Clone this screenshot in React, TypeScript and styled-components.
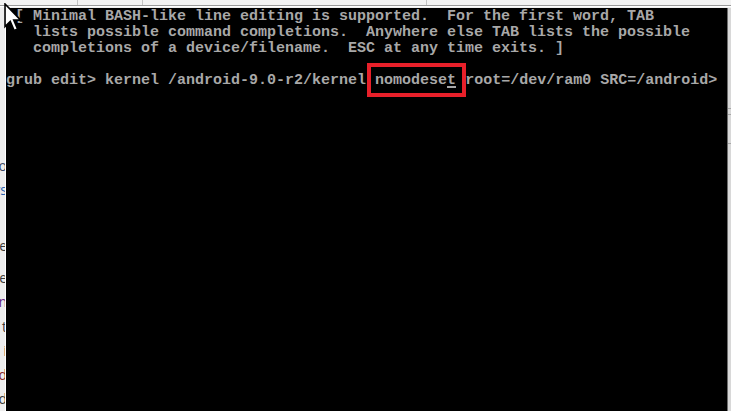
import React from 'react';
import styled, { createGlobalStyle } from 'styled-components';

const HELP_LINES = [
	' [ Minimal BASH-like line editing is supported.  For the first word, TAB',
	'   lists possible command completions.  Anywhere else TAB lists the possible',
	'   completions of a device/filename.  ESC at any time exits. ]',
	'',
];

const SIDE_FRAGMENTS = [
	{ key: 'a', text: 'o', color: '#3b4a66', gap: 0 },
	{ key: 'b', text: 'ys', color: '#2a62b0', gap: 0 },
	{ key: 'c', text: 'e', color: '#3a3a3a', gap: 32 },
	{ key: 'd', text: 'e', color: '#3a3a3a', gap: 8 },
	{ key: 'e', text: 'n', color: '#6a2a86', gap: 0 },
	{ key: 'f', text: 't', color: '#3a3a3a', gap: 0 },
	{ key: 'g', text: 'i', color: '#3a3a3a', gap: 0 },
	{ key: 'h', text: 'd', color: '#8a2a2a', gap: 0 },
	{ key: 'i', text: 'd', color: '#3a3a3a', gap: 0 },
];

const GlobalStyle = createGlobalStyle`
	html, body {
		margin: 0;
		padding: 0;
		background: #f0f0f0;
	}
`;

// plain windows arrow, drawn over the terminal corner
const MousePointer = () => (
	<PointerWrap>
		<svg width="18" height="29" viewBox="0 0 12.4 20">
			<path
				d="M0.7 0.7 L0.7 16.2 L4.3 12.7 L7 19 L9.4 18 L6.7 11.8 L11.5 11.8 Z"
				fill="#ffffff"
				stroke="#000000"
				strokeWidth="1.1"
				strokeLinejoin="miter"
			/>
		</svg>
	</PointerWrap>
);

const App = () => {
	return (
		<>
			<GlobalStyle />
			<Screen>
				<TopStrip>
					<TopTab $width={71} />
					<TopTab $width={64} />
					<TopTab $width={283} />
				</TopStrip>
				<Body>
					<SideStrip>
						{SIDE_FRAGMENTS.map(({ key, text, color, gap }) => (
							<SideLine key={key} $gap={gap}>
								<SideText $color={color}>{text}</SideText>
							</SideLine>
						))}
					</SideStrip>
					<Terminal>
						{HELP_LINES.map((line, i) => (
							<TermRow key={i}>{line}</TermRow>
						))}
						<TermRow>
							grub edit&gt; kernel /android-9.0-r2/kernel{' '}
							<Marked>
								nomodese<Cursor>t</Cursor>
							</Marked>{' '}
							root=/dev/ram0 SRC=/android&gt;
						</TermRow>
					</Terminal>
					<ScrollEdge>
						<Tick $top={100} />
						<Tick $top={106} />
						<Tick $top={135} />
					</ScrollEdge>
				</Body>
				<MousePointer />
			</Screen>
		</>
	);
};

const Screen = styled.div`
	position: relative;
	width: 731px;
	height: 411px;
	display: flex;
	flex-direction: column;
	overflow: hidden;
	background: #f0f0f0;
`;

const TopStrip = styled.div`
	height: 5px;
	display: flex;
	padding-left: 6px;
	background: #f3f3f3;
	border-bottom: 1px solid #9a9a9a;
	box-shadow: 0 1px 0 #ffffff;
	margin-bottom: 2px;
`;

const TopTab = styled.div<{ $width: number }>`
	width: ${(p) => p.$width}px;
	border-right: 1px solid #c4c4c4;
`;

const Body = styled.div`
	flex: 1;
	display: flex;
	min-height: 0;
`;

const SideStrip = styled.div`
	width: 5px;
	border-right: 1px solid #ffffff;
	background: #ededed;
	display: flex;
	flex-direction: column;
	padding-top: 146px;
	overflow: hidden;
`;

const SideLine = styled.div<{ $gap: number }>`
	height: 25px;
	margin-top: ${(p) => p.$gap}px;
	display: flex;
	justify-content: flex-end;
	align-items: center;
	overflow: hidden;
`;

const SideText = styled.span<{ $color: string }>`
	font-family: 'Open Sans', 'Liberation Sans', sans-serif;
	font-size: 14px;
	line-height: 16px;
	color: ${(p) => p.$color};
	margin-right: -2px;
	white-space: nowrap;
`;

const Terminal = styled.div`
	flex: 1;
	background: #000000;
	padding-top: 1px;
	font-family: 'Liberation Mono', 'DejaVu Sans Mono', monospace;
	font-size: 15px;
	font-weight: bold;
	line-height: 16px;
	color: #a8a8a8;
`;

const TermRow = styled.div`
	height: 16px;
	white-space: pre;
`;

const Marked = styled.span`
	position: relative;

	&::after {
		content: '';
		position: absolute;
		left: -8px;
		right: -10px;
		top: -9px;
		bottom: -8px;
		border: 4px solid #e8202a;
	}
`;

const Cursor = styled.span`
	position: relative;

	&::after {
		content: '';
		position: absolute;
		left: 0;
		right: 0;
		bottom: 1px;
		height: 2px;
		background: #a8a8a8;
	}
`;

const ScrollEdge = styled.div`
	position: relative;
	width: 3px;
	border-left: 1px solid #6e6e6e;
	background: #d8d8d8;
`;

const Tick = styled.div<{ $top: number }>`
	position: absolute;
	left: 0;
	right: 0;
	top: ${(p) => p.$top}px;
	height: 1px;
	background: #a6a6a6;
`;

const PointerWrap = styled.div`
	position: absolute;
	left: 4px;
	top: 3px;
	line-height: 0;
`;

export default App;
